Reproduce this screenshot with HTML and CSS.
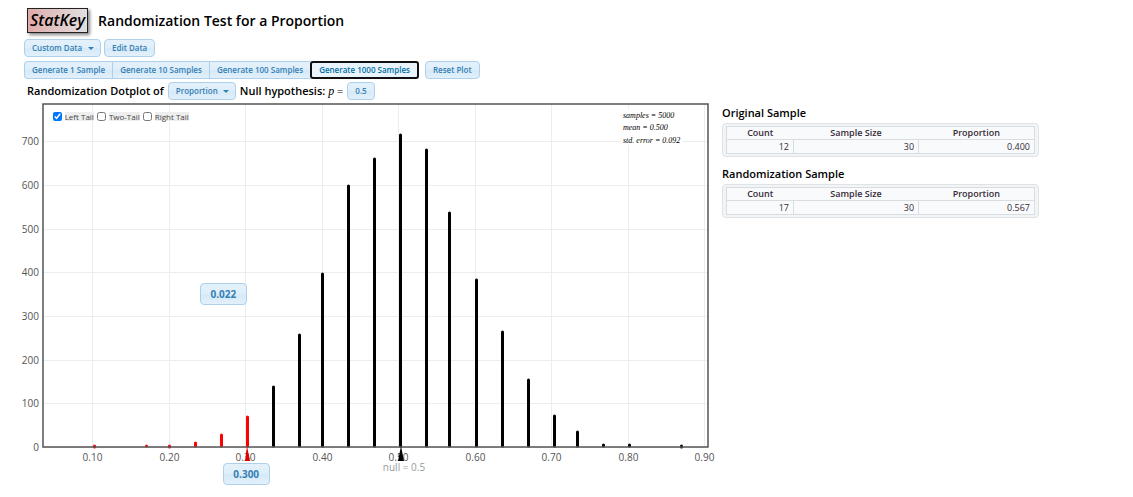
FILE: index.html
```html
<!DOCTYPE html>
<html lang="en">
  <head>
    <meta charset="UTF-8" />
    <meta name="viewport" content="width=device-width, initial-scale=1.0" />
    <title>StatKey: Randomization Test for a Proportion</title>
    <link rel="stylesheet" href="styles.css">
  </head>
  <body>
    <header class="page-header">
      <a class="logo" href="#">StatKey</a>
      <h1>Randomization Test for a Proportion</h1>
    </header>

    <div class="toolbar">
      <span class="dropdown">
        <select class="btn" aria-label="Data set">
          <option>Custom Data</option>
        </select>
        <span class="arrow"></span>
      </span>
      <button type="button" class="btn">Edit Data</button>
    </div>

    <div class="toolbar">
      <div class="btn-group">
        <button type="button" class="btn">Generate 1 Sample</button>
        <button type="button" class="btn">Generate 10 Samples</button>
        <button type="button" class="btn">Generate 100 Samples</button>
        <button type="button" class="btn active">Generate 1000 Samples</button>
      </div>
      <button type="button" class="btn">Reset Plot</button>
    </div>

    <div class="plot-title">
      <label for="statistic">Randomization Dotplot of</label>
      <span class="dropdown">
        <select class="btn" id="statistic">
          <option>Proportion</option>
        </select>
        <span class="arrow"></span>
      </span>
      <span>Null hypothesis: <i class="math">p</i> <span class="equals">=</span></span>
      <button type="button" class="btn">0.5</button>
    </div>

    <main class="content">
      <div class="plot">
        <svg id="chart" class="chart" viewBox="0 0 694 390" role="img" aria-label="Randomization dotplot">
          <g id="grid"></g>
          <rect class="stats-bg" x="603" y="9" width="62" height="36" />
          <text class="stats" x="605" y="18">samples = 5000</text>
          <text class="stats" x="605" y="30">mean = 0.500</text>
          <text class="stats" x="605" y="43">std. error = 0.092</text>
          <g id="bars"></g>
          <rect class="frame" x="25" y="4" width="665" height="343" />
          <text class="null-label" x="386" y="371">null = 0.5</text>
          <path class="tail" d="M229 346 L232 361 H227 Z" />
          <path d="M383 346 L386 361 H380 Z" />
        </svg>
        <div class="tails">
          <input type="checkbox" id="leftTail" checked />
          <label for="leftTail">Left Tail</label>
          <input type="checkbox" id="twoTail" />
          <label for="twoTail">Two-Tail</label>
          <input type="checkbox" id="rightTail" />
          <label for="rightTail">Right Tail</label>
        </div>
        <button type="button" class="btn value area">0.022</button>
        <button type="button" class="btn value cutoff">0.300</button>
      </div>

      <aside class="samples">
        <h2>Original Sample</h2>
        <div class="table-box">
          <table>
            <thead>
              <tr><th class="count">Count</th><th class="size">Sample Size</th><th>Proportion</th></tr>
            </thead>
            <tbody>
              <tr><td>12</td><td>30</td><td>0.400</td></tr>
            </tbody>
          </table>
        </div>
        <h2>Randomization Sample</h2>
        <div class="table-box">
          <table>
            <thead>
              <tr><th class="count">Count</th><th class="size">Sample Size</th><th>Proportion</th></tr>
            </thead>
            <tbody>
              <tr><td>17</td><td>30</td><td>0.567</td></tr>
            </tbody>
          </table>
        </div>
      </aside>
    </main>

    <script src="chart.js"></script>
  </body>
</html>
```
FILE: styles.css
```css
body {
  margin: 0;
  padding: 8px 94px 6px 18px;
  background-color: white;
  color: #000;
  font-family: "Open Sans", "Noto Sans", sans-serif;
  font-size: 11px;
}

.page-header {
  display: flex;
  align-items: center;
  gap: 10px;
  padding-left: 9px;
  height: 25px;
  margin-bottom: 6px;
}

.logo {
  box-sizing: border-box;
  height: 25px;
  padding: 0 2px;
  border: 1px solid #222;
  background: linear-gradient(to right, #dfabab, #e2e0e0);
  box-shadow: 2px 2px 3px #888;
  color: #000;
  font-size: 16px;
  font-style: italic;
  font-weight: 600;
  line-height: 23px;
  text-decoration: none;
}

h1 {
  margin: 0;
  font-size: 14px;
  font-weight: 600;
}

.toolbar {
  display: flex;
  gap: 3px;
  padding-left: 6px;
  margin-bottom: 4px;
}

.btn-group {
  display: flex;
  margin-right: 3px;
}

.btn {
  box-sizing: border-box;
  height: 18px;
  margin: 0;
  padding: 0 7px;
  border: 1px solid #aed0ea;
  border-radius: 4px;
  background: linear-gradient(#e4f1fb, #deeefa 50%, #d5e9f8 50%, #e2f0fa);
  color: #3580b3;
  font-family: inherit;
  font-size: 8px;
  font-weight: 600;
  line-height: 14px;
  cursor: pointer;
}

.btn-group .btn {
  border-radius: 0;
  border-right-width: 0;
}

.btn-group .btn:first-child {
  border-radius: 4px 0 0 4px;
}

.btn-group .btn.active {
  border: 2px solid #101010;
  border-radius: 3px;
  background: #e8f3fb;
  color: #0070a3;
}

.dropdown {
  display: inline-flex;
  position: relative;
}

.dropdown select {
  appearance: none;
  padding-right: 17px;
}

.arrow {
  position: absolute;
  right: 7px;
  top: 8px;
  border: 3px solid transparent;
  border-top-color: #3580b3;
  border-bottom: 0;
  pointer-events: none;
}

.plot-title {
  display: flex;
  align-items: center;
  gap: 4px;
  padding-left: 9px;
  height: 15px;
  margin-bottom: 2px;
  font-weight: 600;
}

.math {
  font-family: "Liberation Serif", serif;
  font-size: 12px;
  font-weight: 400;
}

.equals {
  font-weight: 400;
}

.content {
  display: grid;
  grid-template-columns: 694fr 317fr;
  gap: 10px;
}

.plot {
  position: relative;
}

.chart {
  display: block;
  width: 100%;
  overflow: visible;
}

.frame {
  fill: none;
  stroke: #545454;
  stroke-width: 1.5;
}

.grid-line {
  stroke: #ededed;
  stroke-width: 1;
}

.tick {
  fill: #545454;
  font-size: 10px;
}

.x-tick {
  text-anchor: middle;
}

.y-tick {
  text-anchor: end;
}

.bar {
  stroke: #000;
  stroke-width: 3;
  stroke-linecap: round;
}

.bar.tail {
  stroke: #f00;
}

path.tail {
  fill: #d00;
}

.null-label {
  fill: #999;
  font-size: 10px;
  text-anchor: middle;
}

.stats {
  font-family: "Liberation Serif", serif;
  font-size: 8px;
  font-style: italic;
}

.stats-bg {
  fill: #fff;
}

.tails {
  position: absolute;
  left: 5%;
  top: 3%;
  display: flex;
  align-items: center;
  gap: 3px;
}

.tails input {
  width: 9px;
  height: 9px;
  margin: 0;
}

.tails label {
  background-color: #eee;
  color: #444;
  font-size: 8px;
  line-height: 9px;
}

.value {
  position: absolute;
  min-width: 47px;
  height: 22px;
  font-size: 10px;
  font-weight: 700;
}

.area {
  left: 26.2%;
  top: 47%;
}

.cutoff {
  left: 29.5%;
  top: 93%;
}

h2 {
  margin: 0 0 3px;
  font-size: 11px;
  font-weight: 600;
  line-height: 15px;
}

.samples {
  padding-top: 5px;
}

.table-box {
  padding: 2px 3px;
  margin-bottom: 9px;
  border: 1px solid #dfe3e6;
  border-radius: 4px;
  background-color: #f2f5f7;
}

table {
  width: 100%;
  table-layout: fixed;
  border-collapse: collapse;
  border: 1px solid #dadde0;
  background-color: #f9fafc;
  color: #362b36;
  font-size: 9px;
  line-height: 12px;
}

th,
td {
  padding: 0 4px;
}

th {
  font-weight: 600;
}

.count {
  width: 19%;
}

.size {
  width: 38%;
}

td {
  border: 1px solid #dadde0;
  text-align: right;
  line-height: 13px;
}
```
FILE: chart.js
```js
const svgNS = "http://www.w3.org/2000/svg";
const grid = document.getElementById("grid");
const bars = document.getElementById("bars");

const plot = { left: 25, right: 690, top: 4, bottom: 347 };

// [x, top of the stack of dots]
const stacks = [
  [76, 346], [128, 345], [151, 346], [177, 342], [203, 334], [229, 316],
  [255, 286], [281, 234], [304, 173], [330, 85], [356, 58], [382, 34],
  [408, 49], [431, 112], [458, 179], [484, 231], [510, 279], [536, 315],
  [559, 331], [585, 344], [611, 344], [663, 346],
];

function add(parent, name, attributes, text) {
  const element = document.createElementNS(svgNS, name);
  for (const key in attributes) {
    element.setAttribute(key, attributes[key]);
  }
  if (text !== undefined) {
    element.textContent = text;
  }
  parent.appendChild(element);
}

for (let i = 1; i <= 9; i++) {
  const x = Math.round(74 + (i - 1) * 76.5) + 0.5;
  add(grid, "line", { class: "grid-line", x1: x, x2: x, y1: plot.top, y2: plot.bottom });
  add(grid, "text", { class: "tick x-tick", x: x, y: 361 }, (i / 10).toFixed(2));
}

for (let count = 0; count <= 700; count += 100) {
  const y = Math.round(plot.bottom - count * 0.437) + 0.5;
  add(grid, "line", { class: "grid-line", x1: plot.left, x2: plot.right, y1: y, y2: y });
  add(grid, "text", { class: "tick y-tick", x: 21, y: y + 3 }, count);
}

stacks.forEach(([x, top]) => {
  // stacks at or below the cutoff belong to the left tail
  const name = x <= 229 ? "bar tail" : "bar";
  add(bars, "line", { class: name, x1: x + 0.5, x2: x + 0.5, y1: top + 1, y2: 346 });
});
```
